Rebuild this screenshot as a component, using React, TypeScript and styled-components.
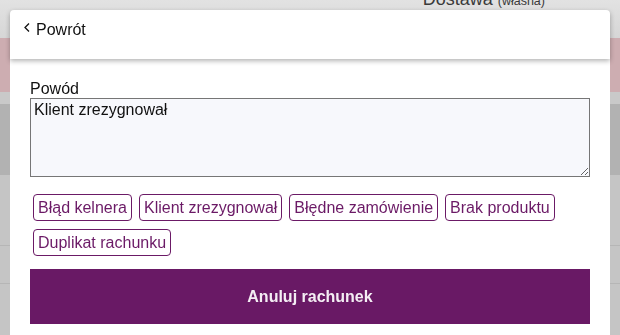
import React from 'react';
import styled, { createGlobalStyle } from 'styled-components';

const GlobalStyle = createGlobalStyle`
    html, body {
        margin: 0;
        padding: 0;
        height: 100%;
        overflow: hidden;
    }
    body {
        font-family: "Liberation Sans", Arial, sans-serif;
        background: #d9d9d9;
    }
`;

const Page = styled.div`
    width: 620px;
    height: 335px;
    display: flex;
    flex-direction: column;
    overflow: hidden;
`;

const Band = styled.div<{ $h: number; $bg: string; $line?: boolean }>`
    height: ${(p) => p.$h}px;
    flex-shrink: 0;
    background: ${(p) => p.$bg};
    border-bottom: ${(p) => (p.$line ? '1px solid #b6b6b6' : 'none')};
`;

const TopBand = styled.div`
    height: 38px;
    flex-shrink: 0;
    background: linear-gradient(#e2e2e2, #d6d6d6);
    display: flex;
    justify-content: flex-end;
    padding-right: 75px;
`;

const DeliveryLabel = styled.div`
    color: #3a3a3a;
    font-size: 18px;
    line-height: 18px;
    margin-top: -10px;
    span {
        font-size: 12.5px;
    }
`;

const Modal = styled.div`
    position: fixed;
    top: 10px;
    left: 10px;
    width: 600px;
    bottom: -20px;
    background: #fff;
    border-radius: 4px;
    display: flex;
    flex-direction: column;
`;

const ModalHeader = styled.div`
    height: 49px;
    box-sizing: border-box;
    display: flex;
    align-items: flex-start;
    padding: 11px 14px 0;
    box-shadow: 0 2px 5px rgba(0, 0, 0, 0.3);
    border-radius: 4px 4px 0 0;
`;

const BackLink = styled.button`
    display: flex;
    align-items: center;
    gap: 6px;
    border: none;
    background: none;
    padding: 0;
    font-family: inherit;
    font-size: 16px;
    line-height: 18px;
    color: #111;
    cursor: pointer;
    svg {
        margin-top: -5px;
    }
`;

const ModalBody = styled.div`
    padding: 21px 20px 0;
    display: flex;
    flex-direction: column;
`;

const Label = styled.label`
    font-size: 16px;
    line-height: 18px;
    color: #111;
`;

const Reason = styled.textarea`
    box-sizing: border-box;
    width: 560px;
    height: 79px;
    margin: 0;
    padding: 2px 3px;
    border: 1px solid #767676;
    background: #f7f8fc;
    font-family: inherit;
    font-size: 16px;
    line-height: 18px;
    color: #111;
    resize: vertical;
`;

const Chips = styled.div`
    display: flex;
    flex-wrap: wrap;
    column-gap: 7px;
    row-gap: 8px;
    padding: 0 3px;
    margin-top: 17px;
`;

const Chip = styled.button`
    height: 27px;
    padding: 0 4px;
    border: 1px solid #6b1a66;
    border-radius: 4px;
    background: #fff;
    color: #6b1a66;
    font-family: inherit;
    font-size: 16px;
    cursor: pointer;
`;

const SubmitButton = styled.button`
    margin-top: 13px;
    height: 55px;
    border: none;
    background: #691965;
    color: #f4eef4;
    font-family: inherit;
    font-size: 16px;
    font-weight: bold;
    cursor: pointer;
`;

const reasons = ['Błąd kelnera', 'Klient zrezygnował', 'Błędne zamówienie', 'Brak produktu', 'Duplikat rachunku'];

const App = () => {
    return (
        <>
            <GlobalStyle />
            <Page>
                <TopBand>
                    <DeliveryLabel>
                        Dostawa <span>(własna)</span>
                    </DeliveryLabel>
                </TopBand>
                <Band $h={54} $bg="#cdadb1" />
                <Band $h={12} $bg="#c9c9c9" />
                <Band $h={71} $bg="#b2b2b2" />
                <Band $h={70} $bg="#c5c5c5" $line />
                <Band $h={37} $bg="#c5c5c5" $line />
                <Band $h={60} $bg="#c5c5c5" />
            </Page>
            <Modal>
                <ModalHeader>
                    <BackLink>
                        <svg width="6" height="9" viewBox="0 0 6 9">
                            <polyline points="5,0.5 1,4.5 5,8.5" fill="none" stroke="#111" strokeWidth="1.3" />
                        </svg>
                        Powrót
                    </BackLink>
                </ModalHeader>
                <ModalBody>
                    <Label>Powód</Label>
                    <Reason defaultValue="Klient zrezygnował" />
                    <Chips>
                        {reasons.map((r) => (
                            <Chip key={r}>{r}</Chip>
                        ))}
                    </Chips>
                    <SubmitButton>Anuluj rachunek</SubmitButton>
                </ModalBody>
            </Modal>
        </>
    );
};

export default App;
